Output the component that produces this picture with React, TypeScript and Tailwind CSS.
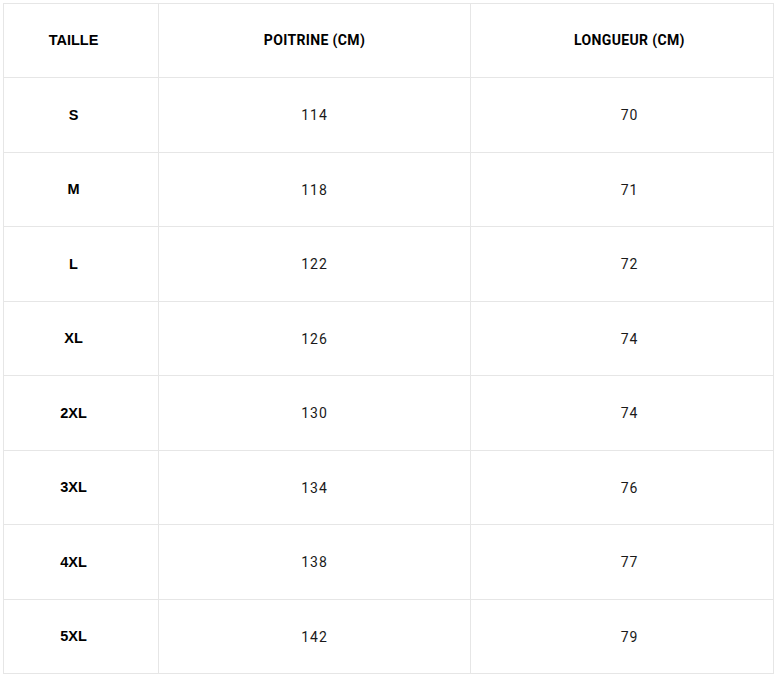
const rows: [string, number, number][] = [
  ["S", 114, 70],
  ["M", 118, 71],
  ["L", 122, 72],
  ["XL", 126, 74],
  ["2XL", 130, 74],
  ["3XL", 134, 76],
  ["4XL", 138, 77],
  ["5XL", 142, 79],
];

const cell = "border border-[#e6e6e6] text-center align-middle";

export default function App() {
  return (
    <div className="min-h-[680px] bg-white p-[3px]">
      <table className="w-[770px] table-fixed border-collapse text-black">
        <colgroup>
          <col className="w-[155px]" />
          <col className="w-[312px]" />
          <col className="w-[303px]" />
        </colgroup>
        <thead>
          <tr className="h-[74px]">
            <th className={`${cell} pr-[15px] font-['Liberation_Sans',Arial,sans-serif] text-[14.5px] font-bold`}>
              TAILLE
            </th>
            <th className={`${cell} font-['Roboto',sans-serif] text-[14px] font-bold tracking-[0.35px]`}>
              POITRINE (CM)
            </th>
            <th className={`${cell} pl-[15px] font-['Roboto',sans-serif] text-[14px] font-bold tracking-[0.35px]`}>
              LONGUEUR (CM)
            </th>
          </tr>
        </thead>
        <tbody>
          {rows.map(([size, chest, length]) => (
            <tr key={size} className="h-[74.5px]">
              <td className={`${cell} pt-[2px] pr-[15px] font-['Liberation_Sans',Arial,sans-serif] text-[14.5px] font-bold`}>
                {size}
              </td>
              <td className={`${cell} pt-[2px] font-['Roboto',sans-serif] text-[14px] tracking-[1px] text-[#1a1a1a]`}>
                {chest}
              </td>
              <td className={`${cell} pt-[2px] pl-[15px] font-['Roboto',sans-serif] text-[14px] tracking-[1px] text-[#1a1a1a]`}>
                {length}
              </td>
            </tr>
          ))}
        </tbody>
      </table>
    </div>
  );
}
